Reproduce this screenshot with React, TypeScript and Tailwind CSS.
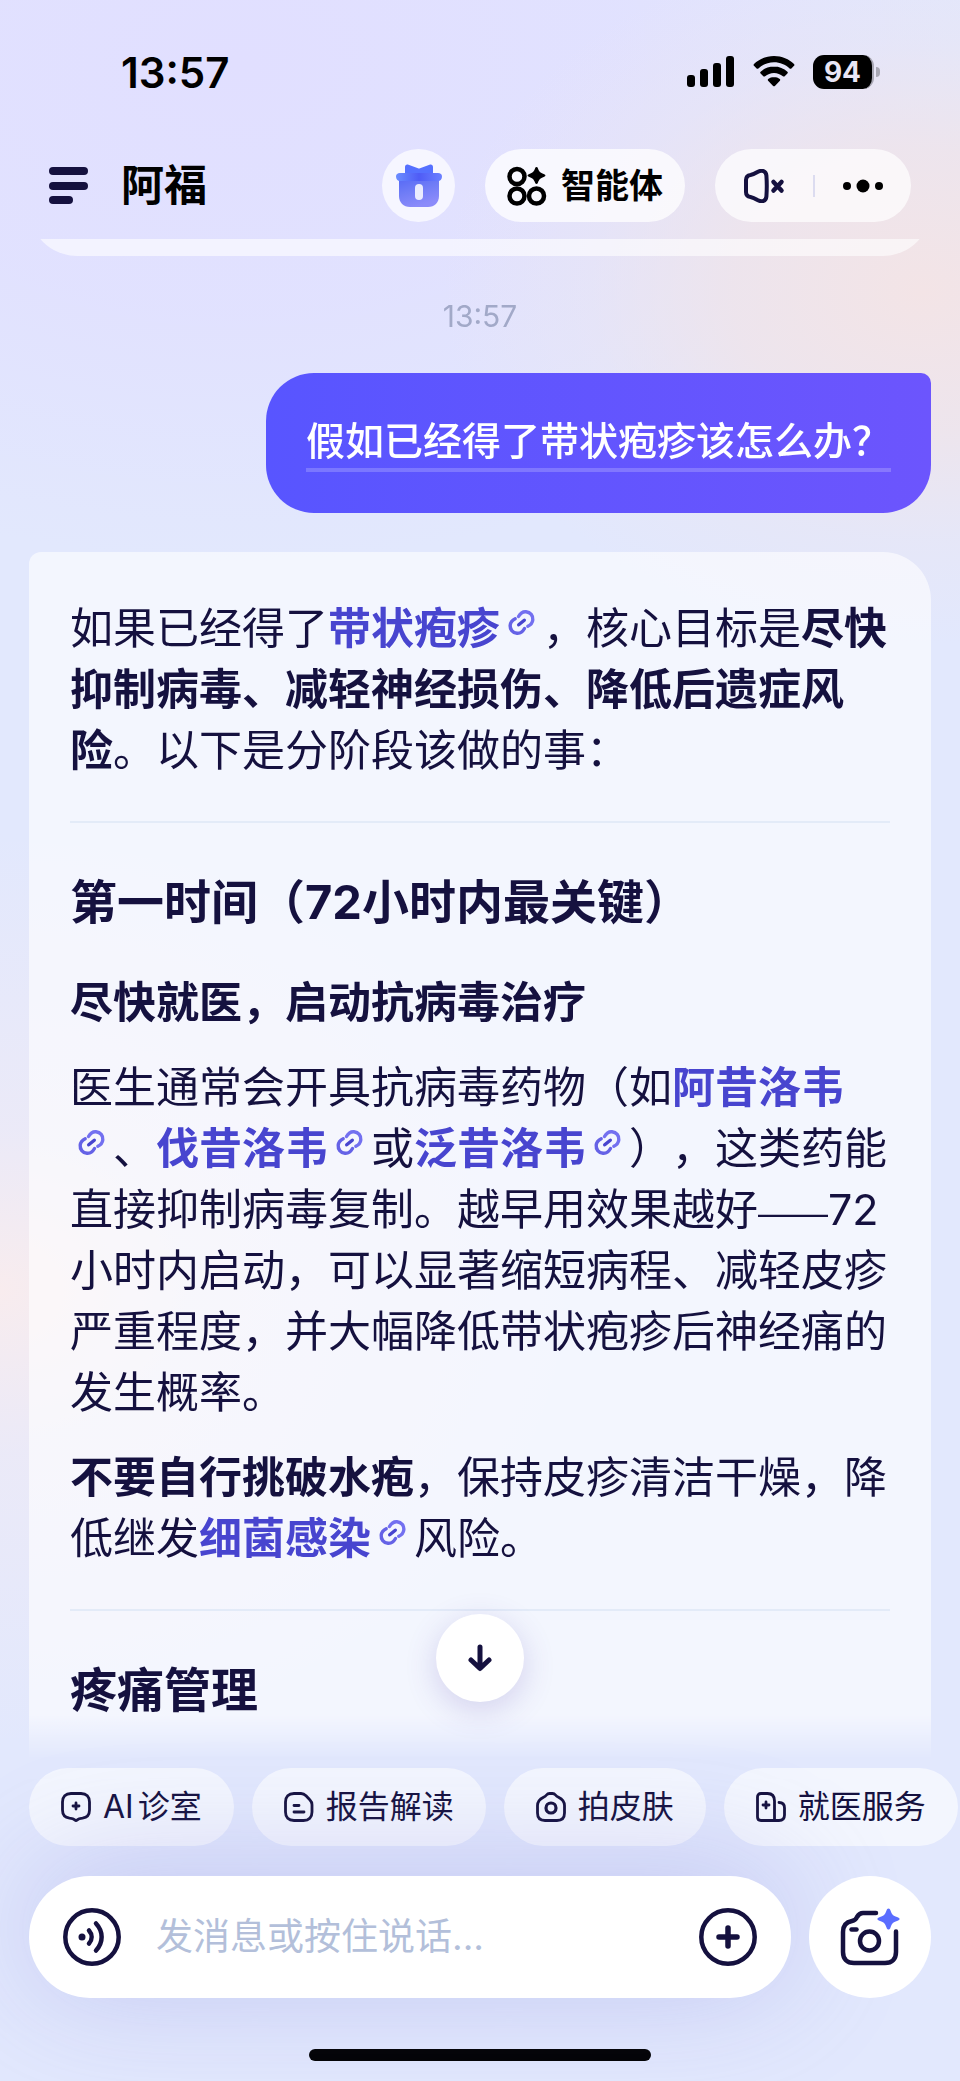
import { useState, type ReactNode } from "react";

// ── Icons ─────────────────────────────────────────────────────────────────────
const SignalIcon = () => (
  <svg width="48" height="32" viewBox="0 0 48 32" fill="currentColor">
    <rect x="0" y="19" width="8" height="12" rx="3" />
    <rect x="13" y="13" width="8" height="18" rx="3" />
    <rect x="26" y="7" width="8" height="24" rx="3" />
    <rect x="39" y="0" width="8" height="31" rx="3" />
  </svg>
);

const WifiIcon = () => (
  <svg width="42" height="32" viewBox="0 0 42 32" fill="currentColor">
    <path d="M21 0C13 0 6 3 1 8c-.6.6-.6 1.200 0 1.800l2.600 2.600c.5.5 1.300.5 1.800 0C9.500 8.500 15 6.200 21 6.200s11.500 2.300 15.600 6.200c.5.5 1.300.5 1.800 0L41 9.800c.6-.6.6-1.200 0-1.800C36 3 29 0 21 0z" />
    <path d="M21 10.500c-5.200 0-9.900 2-13.400 5.200-.6.5-.6 1.300 0 1.800l2.700 2.700c.5.500 1.200.5 1.800.1 2.400-2.100 5.500-3.400 8.900-3.400s6.500 1.300 8.900 3.400c.6.4 1.300.4 1.800-.1l2.700-2.700c.6-.5.6-1.300 0-1.800-3.500-3.200-8.200-5.200-13.400-5.200z" />
    <path d="M21 21c-2.200 0-4.200.8-5.800 2-.6.5-.6 1.200-.1 1.700l5 5.200c.5.6 1.300.6 1.800 0l5-5.200c.5-.5.5-1.200-.1-1.700-1.600-1.200-3.600-2-5.800-2z" />
  </svg>
);

const MenuIcon = () => (
  <svg width="40" height="38" viewBox="0 0 40 38" fill="currentColor">
    <rect x="0" y="0" width="39" height="8" rx="4" />
    <rect x="0" y="15" width="39" height="8" rx="4" />
    <rect x="0" y="29" width="24" height="8" rx="4" />
  </svg>
);

const GiftIcon = () => (
  <svg width="46" height="44" viewBox="0 0 46 44">
    <defs>
      <linearGradient id="giftBox" x1="0" y1="0" x2=".4" y2="1">
        <stop offset="0" stopColor="#5468f6" />
        <stop offset=".5" stopColor="#6f7cf6" />
        <stop offset="1" stopColor="#8b8bfa" />
      </linearGradient>
      <linearGradient id="giftLid" x1="0" y1="0" x2="1" y2="0">
        <stop offset="0" stopColor="#6b8dff" />
        <stop offset=".5" stopColor="#4f5cf6" />
        <stop offset="1" stopColor="#6b80ff" />
      </linearGradient>
    </defs>
    <path d="M9 10V3c0-2 1.500-3 3.500-2.300L22 4.200c.7.300 1.300.3 2 0L33.500.7C35.500 0 37 1 37 3v7z" fill="#5570ff" />
    <path d="M3 13h40v19c0 6.500-4.500 11-11 11H14C7.500 43 3 38.500 3 32z" fill="url(#giftBox)" />
    <path d="M4 9h38c2.500 0 4 1.500 4 3.500 0 2.500-1.500 4.500-4 4.500H4c-2.500 0-4-2-4-4.500C0 10.500 1.500 9 4 9z" fill="url(#giftLid)" />
    <rect x="19" y="20" width="8" height="16" rx="4" fill="#fff" fillOpacity=".85" />
  </svg>
);

const AgentsIcon = () => (
  <svg width="40" height="40" viewBox="0 0 40 40">
    <g fill="none" stroke="#000" strokeWidth="4.500">
      <circle cx="10" cy="10.500" r="7.500" />
      <circle cx="10" cy="30" r="7.500" />
      <circle cx="29.500" cy="30" r="7.500" />
    </g>
    <path d="M29.500 1c.7 0 1.100.4 1.400 1.200 1.200 3.400 2.400 4.600 5.800 5.800 2.400.8 2.400 2.200 0 3-3.400 1.200-4.600 2.400-5.800 5.800-.6 1.700-2.200 1.700-2.800 0-1.200-3.400-2.400-4.600-5.800-5.800-2.400-.8-2.400-2.200 0-3 3.400-1.200 4.600-2.400 5.800-5.800.3-.8.700-1.200 1.400-1.200z" />
  </svg>
);

const MuteIcon = () => (
  <svg width="42" height="34" viewBox="0 0 42 34" fill="none" stroke="currentColor" strokeWidth="4" strokeLinecap="round" strokeLinejoin="round">
    <path d="M3 11c0-2.500 1.500-4.500 4.500-5 2.500-.5 4.500-1.500 7-3C19 .5 23 2 23.400 6.500c.5 7 .5 14 0 21-.4 4.500-4.400 6-8.900 3.500-2.500-1.500-4.500-2.500-7-3-3-.5-4.500-2.500-4.500-5z" />
    <path d="m30.500 13 8 8.500m0-8.500-8 8.500" strokeWidth="4.500" />
  </svg>
);

const MoreIcon = () => (
  <svg width="40" height="14" viewBox="0 0 40 14">
    <circle cx="4" cy="7" r="4" />
    <circle cx="20" cy="7" r="6.500" />
    <circle cx="36" cy="7" r="4" />
  </svg>
);

const LinkIcon = () => (
  <svg className="mx-2 -mt-5 inline-block align-middle" width="27" height="27" viewBox="-1 -1 27 27" fill="none" strokeWidth="3.400" strokeLinecap="round">
    <path d="M9.500 6.500C11.500 3 14 1.500 17 1.800c4.500.4 7.200 4 6.800 8-.3 3-2 5-5 6.500" stroke="#7370f0" />
    <path d="M15.500 18.500C13.500 22 11 23.500 8 23.200c-4.500-.4-7.200-4-6.800-8 .3-3 2-5 5-6.500" stroke="#6562e6" />
    <path d="m9.700 14.800 5.600-4.600" stroke="#4845cf" />
  </svg>
);

const ArrowDownIcon = () => (
  <svg width="24" height="28" viewBox="0 0 24 28" fill="none" stroke="currentColor" strokeWidth="5" strokeLinecap="round" strokeLinejoin="round">
    <path d="M12 3v21M3 16l9 8.500 9-8.500" />
  </svg>
);

const ClinicIcon = () => (
  <svg width="30" height="30" viewBox="0 0 30 30" fill="none" stroke="currentColor" strokeWidth="2.800" strokeLinecap="round" strokeLinejoin="round">
    <path d="M10 1.500h10c5.500 0 8.500 3 8.500 8.500v8c0 5-2.500 7.500-7 8.200-3 .3-4 .5-5.300 1.700-.8.700-1.600.7-2.400 0-1.300-1.200-2.300-1.400-5.300-1.700-4.500-.7-7-3.200-7-8.200v-8c0-5.500 3-8.500 8.500-8.500z" />
    <path d="M15 11v6m-3-3h6" />
  </svg>
);

const ReportIcon = () => (
  <svg width="30" height="30" viewBox="0 0 30 30" fill="none" stroke="currentColor" strokeWidth="2.800" strokeLinecap="round" strokeLinejoin="round">
    <path d="M10 1.500h7c2 0 3.500.7 5 2.200l3.800 4c1.500 1.500 2.200 3 2.200 5V20c0 5.500-3 8.500-8.500 8.500H10C4.500 28.500 1.500 25.500 1.500 20V10c0-5.500 3-8.500 8.500-8.500z" />
    <path d="M10 13.500h5M10 20h10" />
  </svg>
);

const SkinIcon = () => (
  <svg width="30" height="30" viewBox="0 0 30 30" fill="none" stroke="currentColor" strokeWidth="2.800" strokeLinecap="round" strokeLinejoin="round">
    <path d="M10.500 3c.8-1 1.500-1.500 3-1.500h3c1.500 0 2.200.5 3 1.500s1.500 1.500 3 2.200c4 2 6 4.300 6 8.300V21c0 5-2.500 7.500-7.500 7.500H9C4 28.500 1.500 26 1.500 21v-7.500c0-4 2-6.300 6-8.300 1.500-.7 2.200-1.200 3-2.200z" />
    <circle cx="15" cy="16" r="5" strokeWidth="3.200" />
  </svg>
);

const HospitalIcon = () => (
  <svg width="30" height="30" viewBox="0 0 30 30" fill="none" stroke="currentColor" strokeWidth="2.800" strokeLinecap="round" strokeLinejoin="round">
    <path d="M18.500 28.500V9c0-5-2.500-7.500-7-7.500H5c-2.300 0-3.500 1.200-3.500 3.500v20c0 2.300 1.200 3.500 3.500 3.500h18c3.500 0 5.500-2 5.500-5.500v-7c0-3.500-2-5.500-5.500-5.500" />
    <path d="M10 10v6M7 13h6" />
  </svg>
);

const VoiceIcon = () => (
  <svg width="58" height="58" viewBox="0 0 58 58" fill="none" stroke="currentColor" strokeWidth="4.500" strokeLinecap="round">
    <circle cx="29" cy="29" r="26.700" />
    <circle cx="19" cy="29" r="3.500" fill="currentColor" stroke="none" />
    <path d="M26 22.500c3.500 4 3.500 9 0 13M33 15.500c7.500 8 7.500 19 0 27" />
  </svg>
);

const PlusIcon = () => (
  <svg width="58" height="58" viewBox="0 0 58 58" fill="none" stroke="currentColor" strokeLinecap="round">
    <circle cx="29" cy="29" r="26.700" strokeWidth="4.500" />
    <path d="M29 20v18M20 29h18" strokeWidth="5.500" />
  </svg>
);

const CameraIcon = () => (
  <svg width="60" height="58" viewBox="0 0 60 58" fill="none" stroke="currentColor" strokeWidth="4.500" strokeLinecap="round" strokeLinejoin="round">
    <path d="M36 5H23c-3 0-4.500 1.500-6 4-1 2.500-2.500 3.500-5 4-5.500 1-9 4.500-9 11v20c0 7 4 11 11 11h31c7 0 11-4 11-11V23.500" />
    <path d="M11.500 21.500h5" />
    <circle cx="29.500" cy="33" r="9.500" />
    <path d="M48.500.5c1 0 1.600.7 2 2 1.300 4 2.500 5.200 6.500 6.500 3.500 1.200 3.500 3 0 4-4 1.300-5.200 2.500-6.500 6.500-.8 2.800-3.200 2.800-4 0-1.300-4-2.500-5.200-6.500-6.500-3.500-1-3.500-2.800 0-4 4-1.300 5.200-2.500 6.500-6.500.4-1.300 1-2 2-2z" fill="#5a6dff" stroke="none" />
  </svg>
);

// ── Data ──────────────────────────────────────────────────────────────────────
const SHORTCUTS = [
  { label: "AI诊室", icon: <ClinicIcon /> },
  { label: "报告解读", icon: <ReportIcon /> },
  { label: "拍皮肤", icon: <SkinIcon /> },
  { label: "就医服务", icon: <HospitalIcon /> },
];

// tail: punctuation that has to stay on the same line as the link icon
function Term({ children, tail }: { children: ReactNode; tail?: string }) {
  return (
    <>
      <a href="#term" className="font-bold text-[#4845cf]">
        {children}
      </a>
      <span className="whitespace-nowrap">
        <LinkIcon />
        {tail}
      </span>
    </>
  );
}

export default function App() {
  const [message, setMessage] = useState("");

  return (
    <div
      lang="zh-CN"
      className="flex h-screen flex-col overflow-hidden bg-[#e2e8fd] bg-[radial-gradient(ellipse_50%_17%_at_96%_14%,#f3e4e6_0%,#f0e4e9cc_40%,#ebe5f066_70%,#e6e6f800_100%),radial-gradient(ellipse_60%_22%_at_0%_62%,#f8ecee_0%,#f3ebf388_35%,#f3ebf300_100%),radial-gradient(ellipse_80%_24%_at_25%_3%,#e1dfff_0%,#e1e0ffcc_50%,#e1e0ff00_100%)] font-[Inter,'Noto_Sans_CJK_SC',sans-serif] text-[#15113f] [text-spacing-trim:space-all]"
    >
      {/* ── Status bar ─────────────────────────────────────────────────────── */}
      <div className="flex h-36 shrink-0 items-center justify-between pl-[121px] pr-20 text-black">
        <span className="text-[42px] font-semibold">13:57</span>
        <div className="flex items-center gap-[18px]">
          <SignalIcon />
          <WifiIcon />
          <div className="flex items-center gap-0.5">
            <span className="flex h-[34px] w-[61px] items-center justify-center rounded-[11px] border-r-2 border-[#a9a8b4] bg-black text-[28px] font-bold text-[#e9e6f5]">
              94
            </span>
            <span className="h-2.5 w-1 rounded-r-full bg-[#a9a8b4]" />
          </div>
        </div>
      </div>

      {/* ── Header ─────────────────────────────────────────────────────────── */}
      <header className="flex h-[95px] shrink-0 items-start px-[49px] pt-[5px]">
        <button aria-label="菜单" className="flex h-[73px] items-center">
          <MenuIcon />
        </button>
        <h1 className="ml-8 flex h-[73px] items-center text-[43px] font-bold text-black">阿福</h1>
        <div className="ml-auto flex gap-[30px]">
          <button aria-label="礼物" className="flex size-[73px] items-center justify-center rounded-full bg-white/70">
            <GiftIcon />
          </button>
          <button className="flex h-[73px] items-center gap-3.5 rounded-full bg-white/75 px-[22px] text-[34px] font-bold text-black">
            <AgentsIcon />
            智能体
          </button>
          <div className="flex h-[73px] items-center rounded-full bg-white/70 px-7 text-black">
            <button aria-label="静音" className="text-[#15113f]">
              <MuteIcon />
            </button>
            <span className="mx-7 h-[22px] w-0.5 bg-[#dcdcf0]" />
            <button aria-label="更多">
              <MoreIcon />
            </button>
          </div>
        </div>
      </header>

      {/* ── Conversation ───────────────────────────────────────────────────── */}
      <main className="flex min-h-0 flex-1 flex-col overflow-hidden px-[29px] [mask-image:linear-gradient(to_bottom,black_calc(100%-45px),transparent)]">
        {/* tail of the previous answer */}
        <div className="flex h-[17px] shrink-0 items-end overflow-hidden">
          <div className="h-24 w-full shrink-0 rounded-b-[48px] bg-white/60" />
        </div>

        <time className="mt-10 shrink-0 text-center text-[30px] leading-[40px] text-[#a2a9c8]">13:57</time>

        <div className="mt-[37px] shrink-0 self-end rounded-[48px] rounded-tr-[10px] bg-gradient-to-r from-[#5855ff] to-[#6c55fd] px-10 pb-[41px] pt-10 text-white">
          <p className="border-b-4 border-white/20 text-[39px] font-medium leading-[55px]">假如已经得了带状疱疹该怎么办？</p>
        </div>

        <article className="mt-[39px] flex-1 rounded-t-[48px] rounded-tl-[12px] bg-white/60 px-[41px] pt-[46px] text-[43px] leading-[61px]">
          <p>
            如果已经得了<Term tail="，">带状疱疹</Term>核心目标是
            <strong>尽快抑制病毒、减轻神经损伤、降低后遗症风险</strong>。以下是分阶段该做的事：
          </p>
          <hr className="my-10 border-t-2 border-[#e3ebf8]" />
          <h2 className="text-[47px] font-bold leading-[78px]">第一时间（72小时内最关键）</h2>
          <h3 className="mt-[31px] font-bold">尽快就医，启动抗病毒治疗</h3>
          <p className="mt-6">
            医生通常会开具抗病毒药物（如<Term tail="、">阿昔洛韦</Term>
            <Term>伐昔洛韦</Term>或<Term tail="），">泛昔洛韦</Term>
            这类药能直接抑制病毒复制。越早用效果越好
            <span className="font-['Liberation_Sans'] text-[35px] leading-none">——</span>
            72小时内启动，可以显著缩短病程、减轻皮疹严重程度，并大幅降低带状疱疹后神经痛的发生概率。
          </p>
          <p className="mt-6">
            <strong>不要自行挑破水疱</strong>，保持皮疹清洁干燥，降低继发<Term>细菌感染</Term>风险。
          </p>
          <hr className="my-10 border-t-2 border-[#e3ebf8]" />
          <h2 className="text-[47px] font-bold leading-[78px]">疼痛管理</h2>
        </article>
      </main>

      {/* ── Composer ───────────────────────────────────────────────────────── */}
      <footer className="relative shrink-0">
        <button
          aria-label="回到底部"
          className="absolute -top-[146px] left-1/2 flex size-[88px] -translate-x-1/2 items-center justify-center rounded-full bg-white shadow-[0_8px_32px_rgba(80,60,170,0.2)]"
        >
          <ArrowDownIcon />
        </button>

        <nav className="flex gap-[18px] overflow-hidden pl-[29px] pt-2">
          {SHORTCUTS.map((item) => (
            <button
              key={item.label}
              className="flex h-[78px] shrink-0 items-center gap-3 whitespace-nowrap rounded-full bg-white/60 px-8 text-[32px] [text-autospace:normal]"
            >
              {item.icon}
              {item.label}
            </button>
          ))}
        </nav>

        <div className="mt-[30px] flex gap-[18px] px-[29px]">
          <div className="flex h-[122px] min-w-0 flex-1 items-center rounded-full bg-white px-[34px] shadow-[0_-8px_120px_rgba(120,120,215,0.3)]">
            <button aria-label="语音输入">
              <VoiceIcon />
            </button>
            <input
              type="text"
              aria-label="消息"
              value={message}
              onChange={(e) => setMessage(e.target.value)}
              placeholder="发消息或按住说话..."
              className="mx-[35px] min-w-0 flex-1 bg-transparent text-[37px] outline-none placeholder:text-[#b3bfda]"
            />
            <button aria-label="添加">
              <PlusIcon />
            </button>
          </div>
          <button aria-label="拍照" className="flex size-[122px] shrink-0 items-center justify-center rounded-full bg-white">
            <CameraIcon />
          </button>
        </div>

        <div className="mx-auto mb-5 mt-[51px] h-3 w-[342px] rounded-full bg-black" />
      </footer>
    </div>
  );
}
